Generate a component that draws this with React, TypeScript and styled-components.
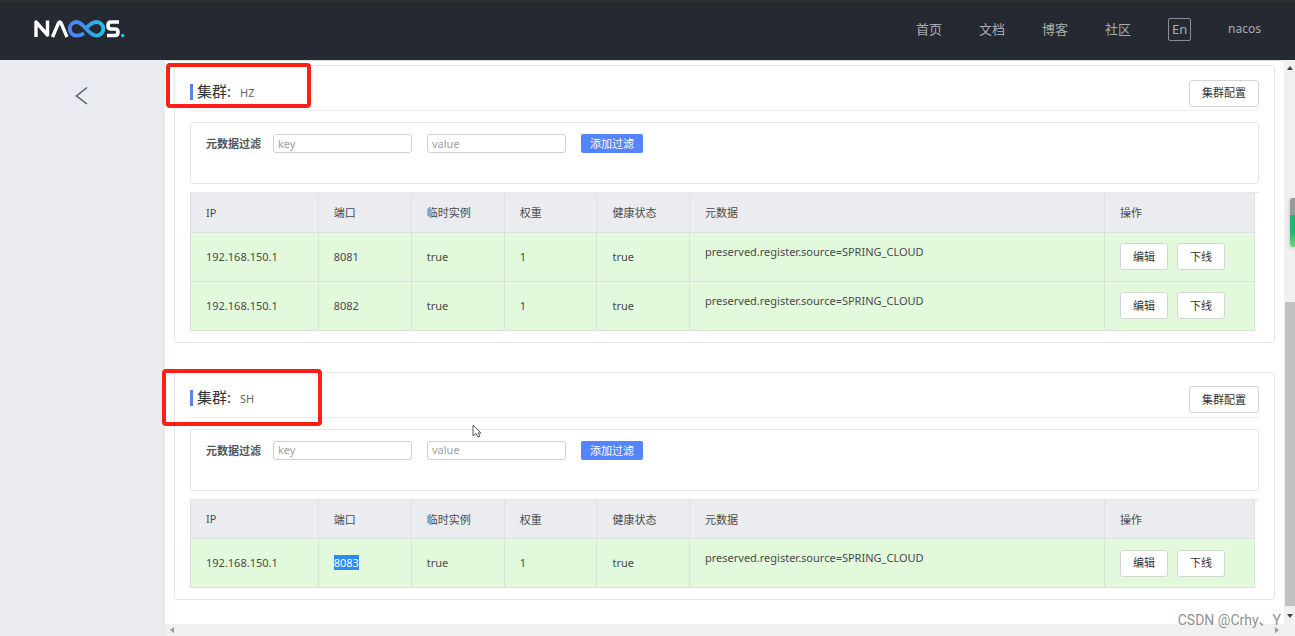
import React from "react";
import styled, { createGlobalStyle } from "styled-components";

const Global = createGlobalStyle`
  * { box-sizing: border-box; }
  html, body { margin: 0; padding: 0; }
  body, button, input {
    font-family: "Noto Sans", "Noto Sans CJK SC", sans-serif;
    font-size: 11px;
    color: #4a4a4a;
  }
`;

const Page = styled.div`
  display: flex;
  flex-direction: column;
  height: 100vh;
  overflow: hidden;
  background: #fff;
`;

const Header = styled.header`
  display: flex;
  align-items: center;
  justify-content: space-between;
  flex: none;
  height: 60px;
  padding: 0 34px 4px;
  background: #252a32;
  border-top: 2px solid #2f2f31;
`;

const LogoLink = styled.a`
  display: flex;
`;

const Nav = styled.nav`
  display: flex;
  align-items: center;
  gap: 37px;
`;

const NavLink = styled.a<{ $small?: boolean }>`
  color: #a9acb1;
  font-size: ${(p) => (p.$small ? 12 : 13)}px;
  line-height: 20px;
  text-decoration: none;
`;

const LangButton = styled.button`
  width: 23px;
  height: 23px;
  padding: 0;
  font-size: 13px;
  line-height: 20px;
  color: #a9acb1;
  background: transparent;
  border: 1px solid #8b8f95;
  border-radius: 2px;
`;

const Body = styled.div`
  display: flex;
  flex: 1;
  min-height: 0;
`;

const Sidebar = styled.aside`
  flex: none;
  width: 165px;
  padding: 22px 0 0 74px;
  background: #eaebf0;
  border-top: 4px solid #e8ecf6;
`;

const BackButton = styled.button`
  display: flex;
  padding: 0;
  background: none;
  border: 0;
`;

const Scroller = styled.div`
  display: flex;
  flex-direction: column;
  flex: 1;
  min-width: 0;
`;

const Content = styled.main`
  display: flex;
  flex-direction: column;
  flex: 1;
  gap: 29px;
  min-height: 0;
  padding: 4px 9px 0;
  border-top: 1px solid #dddddf;
  overflow: hidden;
`;

const Card = styled.section`
  flex: none;
  padding: 0 15px 11px;
  border: 1px solid #e7e7e9;
  border-radius: 3px;
`;

const CardHead = styled.div`
  display: flex;
  justify-content: space-between;
  align-items: center;
  height: 45px;
  padding-top: 10px;
  border-bottom: 1px solid #ececee;
`;

const Title = styled.h2`
  display: flex;
  align-items: baseline;
  margin: 0 0 3px;
  font-size: 15px;
  line-height: 15px;
  font-weight: 400;
  color: #333;
  padding-left: 4px;
  border-left: 3px solid #5584ef;
`;

const ClusterName = styled.span`
  margin-left: 9px;
  font-size: 11px;
  color: #666;
`;

const Button = styled.button`
  height: 27px;
  padding: 0 12px;
  line-height: 20px;
  color: #333;
  background: #fff;
  border: 1px solid #d4d5da;
  border-radius: 3px;
`;

const FilterBox = styled.form`
  display: flex;
  align-items: flex-start;
  height: 62px;
  margin: 11px 0 8px;
  padding: 11px 15px;
  border: 1px solid #e7e7e9;
  border-radius: 3px;
`;

const FilterLabel = styled.label`
  width: 67px;
  line-height: 20px;
  font-weight: 600;
  color: #555;
`;

const FilterInput = styled.input`
  width: 139px;
  height: 19px;
  margin-right: 15px;
  padding: 0 4px 1px;
  border: 1px solid #cfd0d4;
  border-radius: 3px;
  &::placeholder { color: #a0a0a0; }
`;

const AddButton = styled.button`
  width: 62px;
  height: 19px;
  padding: 0;
  line-height: 19px;
  color: #fff;
  background: #5584ff;
  border: 0;
  border-radius: 2px;
`;

const TableWrap = styled.div`
  padding-right: 4px;
  border-top: 1px solid #e6e7eb;
`;

const Table = styled.table`
  width: 100%;
  table-layout: fixed;
  border-collapse: collapse;
`;

const Th = styled.th`
  height: 39px;
  padding: 0 15px;
  text-align: left;
  font-weight: 400;
  background: #ebecf0;
  border: 1px solid #dfe0e6;
  border-top: 0;
`;

const Row = styled.tr`
  background: #e2f9dc;
`;

const Td = styled.td<{ $top?: boolean }>`
  height: 49px;
  padding: ${(p) => (p.$top ? "10px 15px" : "0 15px")};
  line-height: 18px;
  vertical-align: ${(p) => (p.$top ? "top" : "middle")};
  border: 1px solid #d9e2dc;
`;

const Actions = styled.div`
  display: flex;
  gap: 9px;
`;

const Selected = styled.mark`
  color: #fff;
  background: #2b8cf0;
`;

const HBar = styled.div`
  display: flex;
  align-items: center;
  justify-content: space-between;
  flex: none;
  height: 12px;
  padding: 0 5px;
  background: #f0f0f0;
`;

const VBar = styled.div`
  display: flex;
  flex-direction: column;
  align-items: center;
  flex: none;
  width: 11px;
  padding: 6px 0 10px;
  background: #f0f0f0;
`;

const Track = styled.div`
  display: flex;
  flex-direction: column;
  flex: 1;
  width: 100%;
  padding-left: 1px;
`;

const Space = styled.div`
  flex: 232;
`;

const Thumb = styled.div`
  flex: 304;
  background: #c1c1c1;
`;

const Meter = styled.div`
  position: absolute;
  top: 198px;
  right: 0;
  width: 5px;
  height: 49px;
  background: linear-gradient(#999 0 17px, #23b574 17px 35px, #6edb78);
  border-radius: 3px 0 0 3px;
  box-shadow: 0 1px 4px #bbb;
`;

const Frame = styled.div<{ $x: number; $y: number; $w: number; $h: number }>`
  position: absolute;
  left: ${(p) => p.$x}px;
  top: ${(p) => p.$y}px;
  width: ${(p) => p.$w}px;
  height: ${(p) => p.$h}px;
  border: 4px solid #ff2015;
  border-radius: 4px;
  pointer-events: none;
`;

const Cursor = styled.svg`
  position: absolute;
  left: 472px;
  top: 424px;
`;

const Watermark = styled.div`
  position: absolute;
  right: 14px;
  bottom: 6px;
  font-family: Roboto, "Noto Sans CJK SC", sans-serif;
  font-size: 14px;
  line-height: 20px;
  color: #909090;
`;

const Logo = () => (
  <svg width="91" height="20" viewBox="0 0 91 20" fill="none" strokeWidth="3.4" role="img" aria-label="Nacos">
    <defs>
      <linearGradient id="loop" x1="34" y1="0" x2="71" y2="0" gradientUnits="userSpaceOnUse">
        <stop stopColor="#4a86f5" />
        <stop offset="0.45" stopColor="#3d92ee" />
        <stop offset="1" stopColor="#1fc8e4" />
      </linearGradient>
    </defs>
    <path d="M2 18V3L13.500 16V1.500" stroke="#fff" strokeLinejoin="round" />
    <path d="M18.500 18L24.500 4Q25.800 2 27.100 4L33 18" stroke="#fff" />
    <path d="M50 14.300Q47 16.600 42.500 16.600A6.800 6.800 0 0 1 42.500 3C50 3 54 16.600 62.500 16.600A6.800 6.800 0 0 0 62.500 3C58 3 55 6 52 9.500" stroke="url(#loop)" strokeWidth="3.800" />
    <path d="M85 3H77Q74 3 74 6.500T77 10H81Q84 10 84 13.200T81 16.500H73" stroke="#fff" strokeWidth="3.600" />
    <circle cx="88.700" cy="16.500" r="1.700" fill="#1fc8e4" />
  </svg>
);

const Arrow = ({ d, w, h, color }: { d: string; w: number; h: number; color: string }) => (
  <svg width={w} height={h} viewBox={`0 0 ${w} ${h}`} aria-hidden="true">
    <path d={d} fill={color} />
  </svg>
);

const columns = [
  { name: "IP", width: "12%" },
  { name: "端口", width: "8.75%" },
  { name: "临时实例", width: "8.75%" },
  { name: "权重", width: "8.7%" },
  { name: "健康状态", width: "8.7%" },
  { name: "元数据", width: "39%" },
  { name: "操作", width: "14.1%" },
];

type ClusterProps = { name: string; ports: string[]; selected?: string };

const Cluster = ({ name, ports, selected }: ClusterProps) => (
  <Card>
    <CardHead>
      <Title>
        集群:<ClusterName>{name}</ClusterName>
      </Title>
      <Button type="button">集群配置</Button>
    </CardHead>
    <FilterBox>
      <FilterLabel htmlFor={`key-${name}`}>元数据过滤</FilterLabel>
      <FilterInput id={`key-${name}`} placeholder="key" />
      <FilterInput aria-label="value" placeholder="value" />
      <AddButton type="button">添加过滤</AddButton>
    </FilterBox>
    <TableWrap>
      <Table>
        <colgroup>
          {columns.map((c) => (
            <col key={c.name} width={c.width} />
          ))}
        </colgroup>
        <thead>
          <tr>
            {columns.map((c) => (
              <Th key={c.name} scope="col">{c.name}</Th>
            ))}
          </tr>
        </thead>
        <tbody>
          {ports.map((port) => (
            <Row key={port}>
              <Td>192.168.150.1</Td>
              <Td>{port === selected ? <Selected>{port}</Selected> : port}</Td>
              <Td>true</Td>
              <Td>1</Td>
              <Td>true</Td>
              <Td $top>preserved.register.source=SPRING_CLOUD</Td>
              <Td>
                <Actions>
                  <Button type="button">编辑</Button>
                  <Button type="button">下线</Button>
                </Actions>
              </Td>
            </Row>
          ))}
        </tbody>
      </Table>
    </TableWrap>
  </Card>
);

export default function App() {
  return (
    <Page>
      <Global />
      <Header>
        <LogoLink href="#"><Logo /></LogoLink>
        <Nav>
          <NavLink href="#">首页</NavLink>
          <NavLink href="#">文档</NavLink>
          <NavLink href="#">博客</NavLink>
          <NavLink href="#">社区</NavLink>
          <LangButton type="button">En</LangButton>
          <NavLink href="#" $small>nacos</NavLink>
        </Nav>
      </Header>
      <Body>
        <Sidebar>
          <BackButton type="button" aria-label="返回">
            <svg width="14" height="20" viewBox="0 0 14 20" fill="none" stroke="#4c5d72" strokeWidth="1.5">
              <path d="M13 1.500L2.500 10L13 18" />
            </svg>
          </BackButton>
        </Sidebar>
        <Scroller>
          <Content>
            <Cluster name="HZ" ports={["8081", "8082"]} />
            <Cluster name="SH" ports={["8083"]} selected="8083" />
          </Content>
          <HBar>
            <Arrow d="M4 0V6L0 3Z" w={4} h={6} color="#999" />
            <Arrow d="M0 0V6L4 3Z" w={4} h={6} color="#999" />
          </HBar>
        </Scroller>
        <VBar>
          <Arrow d="M0 4H6L3 0Z" w={6} h={4} color="#444" />
          <Track>
            <Space />
            <Thumb />
          </Track>
          <Arrow d="M0 8H6L3 12Z" w={6} h={20} color="#444" />
        </VBar>
      </Body>
      <Meter />
      <Frame $x={166} $y={63} $w={145} $h={45} />
      <Frame $x={162} $y={369} $w={160} $h={57} />
      <Cursor width="10" height="15" viewBox="0 0 10 15" fill="#fff" stroke="#555">
        <path d="M1 1V12L4 9.500L6 13L8 12L6 9H9Z" />
      </Cursor>
      <Watermark>CSDN @Crhy、Y</Watermark>
    </Page>
  );
}
